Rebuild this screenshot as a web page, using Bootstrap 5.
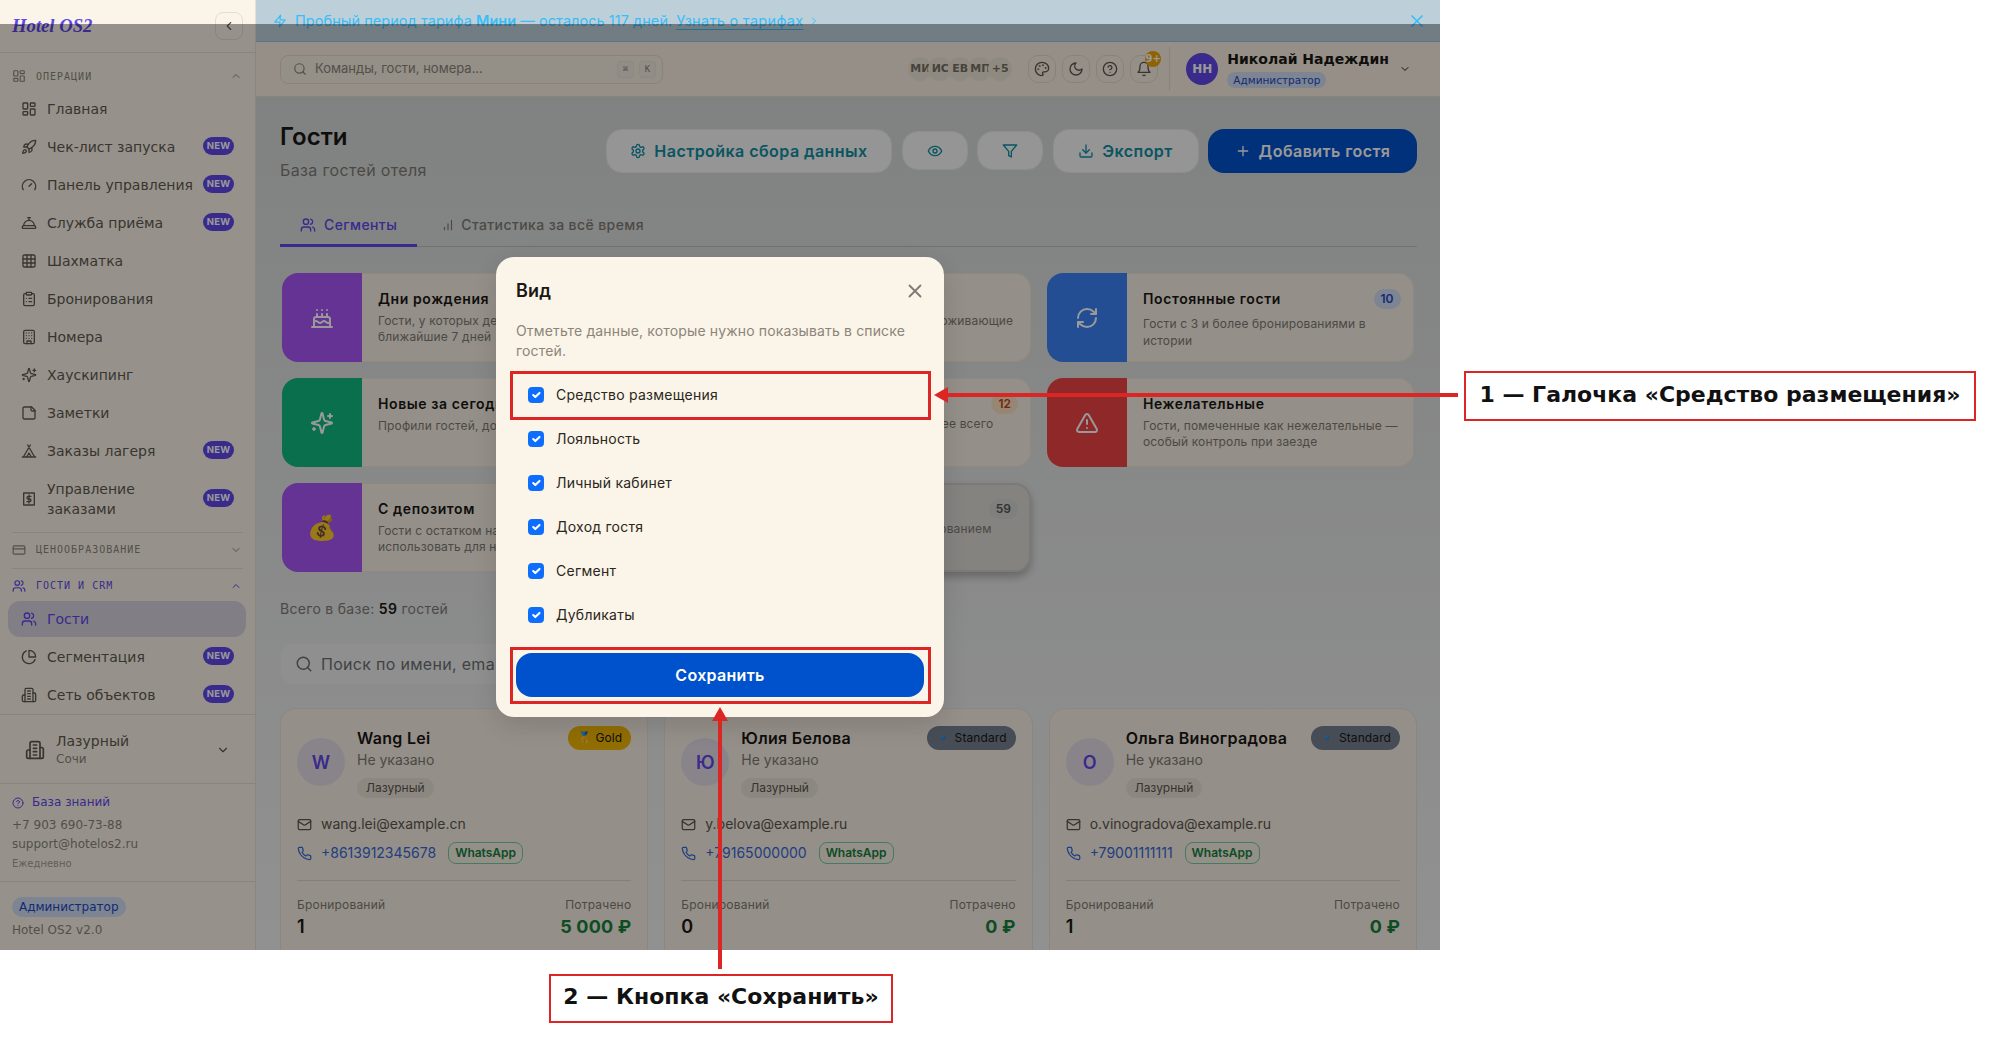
<!DOCTYPE html>
<html lang="ru">
<head>
<meta charset="utf-8">
<title>Hotel OS2</title>
<link href="https://cdn.jsdelivr.net/npm/bootstrap@5.3.0/dist/css/bootstrap.min.css" rel="stylesheet">
<style>
html,body{margin:0;background:#fff;width:1997px;height:1047px;overflow:hidden;}
body{font-family:Inter,"Liberation Sans",sans-serif;color:#1a1814;font-size:14px;}
svg.ic{fill:none;stroke:currentColor;stroke-width:2;stroke-linecap:round;stroke-linejoin:round;flex-shrink:0;display:block;}
.s12{width:12px;height:12px}.s14{width:14px;height:14px}.s15{width:15px;height:15px}.s16{width:16px;height:16px}.s18{width:18px;height:18px}.s20{width:20px;height:20px}.s22{width:22px;height:22px}.s24{width:24px;height:24px}
.app-frame{position:relative;width:1440px;height:950px;overflow:hidden;display:flex;background:#eee;}
/* sidebar */
.side{width:256px;flex:none;height:950px;background:#fbf4e8;border-right:1px solid #e7e0d4;font-family:"DejaVu Sans",sans-serif;color:#5c564e;display:flex;flex-direction:column;}
.side>*{flex:none;}
.brand{height:53px;border-bottom:1px solid #e4ddd0;padding:0 12px;}
.logo{font-family:"Liberation Serif",serif;font-style:italic;font-weight:700;font-size:18.7px;color:#5f47ea;line-height:50px;}
.collapse-btn{width:28px;height:28px;border:1px solid #e4ddd0;border-radius:8px;color:#5c564e;}
.sec-head{height:30px;padding:0 13px 0 12px;font-family:"DejaVu Sans Mono",monospace;font-size:10px;letter-spacing:1px;text-transform:uppercase;color:#8a8479;}
.sec-head.first{margin-top:8px;}
.sec-head .t,.sec-line .t,.sec-wrap .t{margin-left:10px;flex:1}
.sec-line{height:36px;border-top:1px solid #e4ddd0;margin:5px 12px 0;padding:0 1px 2px 0;font-family:"DejaVu Sans Mono",monospace;font-size:10px;letter-spacing:1px;color:#8a8479;}
.sec-wrap{margin:0 12px;border-top:1px solid #e4ddd0;padding:1px 1px 0 0;height:33px;font-family:"DejaVu Sans Mono",monospace;font-size:10px;letter-spacing:1px;color:#5f47ea;}
.menu{display:flex;flex-direction:column;gap:2px;padding:0 9px 0 8px;}
.mi{display:flex;align-items:center;gap:10px;padding:8px 12px 8px 13px;line-height:20px;font-size:14px;color:#5f5950;border-radius:12px;}
.mi .lb{flex:1;min-width:0;}
.mi.on{background:#d9d2de;color:#5f47ea;}
.mi .nb{flex:none;width:31px;text-align:center;background:#5f47ea;color:#fff;font-family:Inter,sans-serif;font-size:9.5px;font-weight:700;line-height:18px;height:18px;padding:0;border-radius:9px;position:relative;top:-1px;letter-spacing:.2px;}
.prop{height:69px;border-top:1px solid #e4ddd0;margin-top:1px;padding:1px 25px 0 25px;}
.prop .nm{font-size:14px;line-height:18px;color:#5f5950;}
.prop .ct{font-size:12px;line-height:18px;color:#8a8479;}
.prop .bi{margin-right:3px;}
.help{height:98px;border-top:1px solid #e4ddd0;padding:9px 12px 0;font-size:12px;line-height:19px;color:#8a8479;}
.help .kb{color:#5f47ea;margin-bottom:4px;}
.help .dl{font-size:10px;color:#a49d91;}
.side>.foot{flex:1;border-top:1px solid #e4ddd0;padding:15px 12px 0;font-size:12px;color:#8a8479;}
.rolepill{display:inline-block;background:#d0dcf3;color:#1f48c0;border-radius:10px;line-height:20px;height:20px;padding:0 7px;}
.foot .ver{margin-top:4px;line-height:18px;}
/* main */
.mainc{flex:1;min-width:0;display:flex;flex-direction:column;height:950px;background:linear-gradient(180deg,#d4d6d6 0,#d6d8d8 10%,#f2f2f2 100%);}
.trial{height:42px;flex:none;background:#bdd0d9;border-bottom:1px solid #8cc6e6;color:#38bdf8;padding:0 13px 0 17px;font-size:14.5px;letter-spacing:.05px;}
.trial b{font-weight:600}
.trial u{text-underline-offset:3px;letter-spacing:.3px;}
.topb{height:55px;flex:none;background:#fbefe1;border-bottom:1px solid #e5dccd;padding:0 29px 0 24px;}
.cmd{width:383px;height:29px;border:1px solid #e3dacb;border-radius:8px;background:#f7eee2;padding:0 6px 0 12px;color:#8d8579;font-size:13px;}
.cmd .ph{flex:1;margin-left:8px;}
.kk{width:17px;height:17px;border:1px solid #ebe3d6;background:#f3ecdf;border-radius:4px;font-family:"DejaVu Sans Mono",monospace;font-size:9px;line-height:15px;text-align:center;margin-left:5px;color:#8d8579;}
.stack{margin-left:auto;margin-right:16px;}
.stack span{width:24px;height:24px;border-radius:50%;background:#efe6d8;font-family:"DejaVu Sans",sans-serif;font-size:11px;font-weight:600;color:#766f64;display:flex;align-items:center;justify-content:center;margin-left:-4px;overflow:hidden;}
.tb-btn{width:28px;height:28px;border:1px solid #e3dacb;border-radius:10px;color:#5c564e;position:relative;margin-left:6px;}
.tb-btn.n1{margin-left:0}
.dot9{position:absolute;right:-4px;top:-5px;width:16px;height:16px;border-radius:50%;background:#f0a30a;color:#fff;font-size:10px;font-weight:700;line-height:16px;text-align:center;font-family:"DejaVu Sans",sans-serif;}
.vdiv{width:1px;height:44px;background:#e3dacb;margin:0 16px 0 11px;}
.ava-u{width:32px;height:32px;border-radius:50%;background:#5f47ea;color:#fff;font-family:"DejaVu Sans",sans-serif;font-size:12px;font-weight:700;margin-right:9px;}
.unm{font-family:"DejaVu Sans",sans-serif;font-weight:700;font-size:14px;line-height:18px;color:#1a1814;}
.urole{display:inline-block;font-family:"DejaVu Sans",sans-serif;font-size:10.5px;line-height:16px;height:16px;padding:0 6px;border-radius:8px;background:#d0dcf3;color:#1f48c0;margin-top:1px;}
.umeta{margin-right:10px;}
.contentc{padding:24px 23px 0 24px;flex:1;overflow:hidden;}
h1.ttl{font-size:24px;font-weight:600;line-height:32px;margin:0;color:#1a1814;}
.subt{font-size:16px;line-height:20px;margin-top:7px;color:#7e7a74;letter-spacing:.35px;}
.acts{margin-top:8px;gap:9.5px;}
.btn.ghost{height:44px;border-radius:16px;background:#f8f8f8;border:1px solid #ececec;color:#0f8ea3;font-size:16px;font-weight:600;display:flex;align-items:center;justify-content:center;gap:8px;padding:0;letter-spacing:.45px;}
.btn.ghost.w1{width:286px}.btn.ghost.w2{width:66px;height:39px;margin-top:2px;}.btn.ghost.w3{width:146px}
.btn.prim{height:44px;width:209px;border-radius:16px;background:#0052cc;border:0;color:#fff;font-size:16px;font-weight:600;display:flex;align-items:center;justify-content:center;gap:8px;padding:0;letter-spacing:.45px;}
.tabsx{margin-top:20px;height:47px;border-bottom:1px solid #bdbfbf;gap:4px;}
.tabx{display:flex;align-items:center;gap:8px;padding:2px 20px 0;height:47px;color:#7e7a74;font-size:14px;font-weight:500;letter-spacing:.4px;}
.tabx.on{color:#5f47ea;border-bottom:3px solid #5f47ea;padding-top:5px;}
.tabx .bi2{margin-right:-2px;}
.seg-grid{display:grid;grid-template-columns:repeat(3,366.5px);gap:16px 16px;margin:26px 2px 0;}
.seg{height:89px;background:#f7efe3;box-shadow:inset 0 0 0 1px #efe4d4;border-radius:16px;display:flex;overflow:hidden;}
.seg.hov{box-shadow:inset 0 0 0 2px #cfccc7,0 5px 8px rgba(0,0,0,.25);background:#dcdad6;overflow:visible;}
.seg .sw{width:80px;flex:none;display:flex;align-items:center;justify-content:center;color:#fff;}
.sw.pu{background:#a855f7}.sw.gr{background:#10b981}.sw.bl{background:#3b82f6}.sw.re{background:#ef4444}.sw.ye{background:#f59e0b}.sw.gy{background:#94a3b8}
.seg .bd{flex:1;min-width:0;padding:16px 13px 0 16px;}
.seg .tt{font-size:14px;font-weight:600;line-height:20px;letter-spacing:.6px;color:#1a1814;white-space:nowrap;}
.seg .ds{font-size:12px;line-height:16px;margin-top:4px;color:#7e7a74;letter-spacing:.15px;}
.seg .ds.tall{margin-top:6px;line-height:17px;}
.seg .ds.tight{margin-top:2px;}
.cnt{flex:none;height:20px;border-radius:10px;padding:0 7px;font-size:12px;font-weight:600;line-height:20px;}
.cnt.b{background:#d0dcf3;color:#1f48c0}.cnt.o{background:#fae1c4;color:#c2410c}.cnt.g{background:#d4d4d2;color:#555}
.tot{margin-top:27px;line-height:20px;font-size:14px;color:#7e7a74;letter-spacing:.3px;}
.tot b{font-weight:600;color:#1a1814}
.gsearch{margin-top:25px;margin-left:1px;width:600px;height:40px;background:#efefef;border-radius:12px;color:#6b7075;padding:0 14px;font-size:16px;gap:8px;letter-spacing:.3px;}
.g-grid{display:grid;grid-template-columns:repeat(3,1fr);gap:16px;margin-top:24px;}
.card.gc{height:300px;background:#f7efe3;border:1px solid #e9e0d3;border-radius:16px;padding:17px 16px 16px;color:#1a1814;}
.ga{width:48px;height:48px;border-radius:50%;background:#e4dde7;color:#5f47ea;font-size:18px;font-weight:600;flex:none;margin-right:12px;}
.gn{font-size:16px;font-weight:600;line-height:24px;white-space:nowrap;letter-spacing:.3px;}
.gs{font-size:14px;line-height:20px;color:#7e7a74;}
.gp{display:inline-block;margin-top:8px;height:20px;line-height:20px;font-size:12px;padding:0 9px;border-radius:10px;background:#eae2d6;color:#5c564e;}
.tier{flex:none;margin-left:auto;height:24px;border-radius:12px;padding:0 9px;font-size:12px;line-height:24px;white-space:nowrap;color:#1a1814;letter-spacing:.1px;}
.tier.go{background:#f2b705}.tier.st{background:#76808f}
.gl{font-size:14px;line-height:20px;color:#5c564e;gap:9px;}
.gl.m{margin-top:16px;}
.gl.p{margin-top:8px;height:22px;color:#3868d8;}
.wa{height:22px;border:1px solid #6fcf97;border-radius:8px;color:#15803d;font-size:12px;font-weight:600;line-height:20px;padding:0 6px;margin-left:3px;}
.gr-line{border-top:1px solid #ddd5c8;margin-top:16px;padding-top:16px;}
.sl{font-size:12px;line-height:16px;color:#7e7a74;letter-spacing:.2px;}
.sv{font-size:18px;font-weight:600;line-height:24px;margin-top:2px;}
.sg{font-size:18px;font-weight:700;line-height:24px;margin-top:2px;color:#15803d;letter-spacing:.2px;}
/* overlay */
.shade{position:absolute;left:0;right:0;top:24px;bottom:0;background:rgba(0,0,0,.4);}
.dlg{position:absolute;left:496px;top:257px;width:448px;height:460px;background:#fbf4e8;border-radius:18px;padding:20px;box-shadow:0 8px 24px rgba(0,0,0,.12);}
.dlg h2{font-size:18px;font-weight:600;line-height:28px;margin:0;color:#1a1814;letter-spacing:.2px;}
.dlg .x{color:#7e7a74;margin-right:-2px;}
.dlg p{font-size:14px;line-height:20px;margin:16px 0 12px;color:#8b857a;letter-spacing:.15px;}
.dlg-row{height:44px;padding-left:12px;gap:12px;display:flex;align-items:center;font-size:14px;color:#2a2721;letter-spacing:.25px;}
.dlg-row .form-check-input{margin:0;width:16px;height:16px;flex:none;}
.dlg-row .tx{position:relative;top:-.5px;}
.dlg .btn-save{display:block;width:408px;height:44px;margin-top:16px;border-radius:16px;background:#0052cc;border:0;color:#fff;font-size:16px;font-weight:600;padding:0;letter-spacing:.3px;}
/* annotations */
.an-box{position:absolute;border:3px solid #dc2626;}
.an-a{left:510px;top:371px;width:421px;height:49px;}
.an-b{left:510px;top:647px;width:421px;height:57px;}
.an-lb{position:absolute;border:2px solid #dc2626;background:#fff;color:#111;font-family:"DejaVu Sans",sans-serif;font-weight:700;font-size:22px;display:flex;align-items:center;justify-content:center;white-space:nowrap;padding-bottom:4px;}
.an-l1{left:1464px;top:371px;width:512px;height:50px;}
.an-l2{left:549px;top:974px;width:344px;height:49px;}
.an-svg{position:absolute;left:0;top:0;width:1997px;height:1047px;pointer-events:none;}
</style>
</head>
<body>
<svg width="0" height="0" style="position:absolute" aria-hidden="true">
<defs>
<symbol id="dash" viewBox="0 0 24 24"><rect x="3" y="3" width="7" height="9" rx="1"/><rect x="14" y="3" width="7" height="5" rx="1"/><rect x="14" y="12" width="7" height="9" rx="1"/><rect x="3" y="16" width="7" height="5" rx="1"/></symbol>
<symbol id="rocket" viewBox="0 0 24 24"><path d="M4.5 16.5c-1.5 1.26-2 5-2 5s3.74-.5 5-2c.71-.84.7-2.13-.09-2.91a2.18 2.18 0 0 0-2.91-.09z"/><path d="m12 15-3-3a22 22 0 0 1 2-3.95A12.88 12.88 0 0 1 22 2c0 2.72-.78 7.5-6 11a22.35 22.35 0 0 1-4 2z"/><path d="M9 12H4s.55-3.03 2-4c1.62-1.08 5 0 5 0"/><path d="M12 15v5s3.03-.55 4-2c1.08-1.62 0-5 0-5"/></symbol>
<symbol id="gauge" viewBox="0 0 24 24"><path d="m12 14 4-4"/><path d="M3.34 19a10 10 0 1 1 17.32 0"/></symbol>
<symbol id="bellc" viewBox="0 0 24 24"><path d="M3 20a1 1 0 0 1-1-1v-1a2 2 0 0 1 2-2h16a2 2 0 0 1 2 2v1a1 1 0 0 1-1 1Z"/><path d="M20 16a8 8 0 1 0-16 0"/><path d="M12 4v4"/><path d="M10 4h4"/></symbol>
<symbol id="grid" viewBox="0 0 24 24"><rect x="3" y="3" width="18" height="18" rx="2"/><path d="M3 9h18M3 15h18M9 3v18M15 3v18"/></symbol>
<symbol id="clip" viewBox="0 0 24 24"><rect x="8" y="2" width="8" height="4" rx="1"/><path d="M16 4h2a2 2 0 0 1 2 2v14a2 2 0 0 1-2 2H6a2 2 0 0 1-2-2V6a2 2 0 0 1 2-2h2"/><path d="M12 11h4M12 16h4M8 11h.01M8 16h.01"/></symbol>
<symbol id="hotel" viewBox="0 0 24 24"><rect x="4" y="2" width="16" height="20" rx="2"/><path d="M9 22v-4h6v4M8 6h.01M16 6h.01M12 6h.01M12 10h.01M12 14h.01M16 10h.01M16 14h.01M8 10h.01M8 14h.01"/></symbol>
<symbol id="spark" viewBox="0 0 24 24"><path d="M9.937 15.5A2 2 0 0 0 8.5 14.063l-6.135-1.582a.5.5 0 0 1 0-.962L8.5 9.936A2 2 0 0 0 9.937 8.5l1.582-6.135a.5.5 0 0 1 .963 0L14.063 8.5A2 2 0 0 0 15.5 9.937l6.135 1.581a.5.5 0 0 1 0 .964L15.5 14.063a2 2 0 0 0-1.437 1.437l-1.582 6.135a.5.5 0 0 1-.963 0z"/><path d="M20 3v4M22 5h-4M4 17v2M5 18H3"/></symbol>
<symbol id="note" viewBox="0 0 24 24"><path d="M16 3H5a2 2 0 0 0-2 2v14a2 2 0 0 0 2 2h14a2 2 0 0 0 2-2V8Z"/><path d="M15 3v4a2 2 0 0 0 2 2h4"/></symbol>
<symbol id="tent" viewBox="0 0 24 24"><path d="M3.5 21 14 3M20.5 21 10 3M15.5 21 12 15l-3.5 6M2 21h20"/></symbol>
<symbol id="bill" viewBox="0 0 24 24"><path d="M4 3h16v18H4z"/><path d="M15 8h-4a2 2 0 0 0 0 4h2a2 2 0 0 1 0 4H9M12 6v12"/></symbol>
<symbol id="cardi" viewBox="0 0 24 24"><rect x="2" y="5" width="20" height="14" rx="2"/><path d="M2 10h20"/></symbol>
<symbol id="users" viewBox="0 0 24 24"><path d="M16 21v-2a4 4 0 0 0-4-4H6a4 4 0 0 0-4 4v2"/><circle cx="9" cy="7" r="4"/><path d="M22 21v-2a4 4 0 0 0-3-3.87M16 3.13a4 4 0 0 1 0 7.75"/></symbol>
<symbol id="pie" viewBox="0 0 24 24"><path d="M21.21 15.89A10 10 0 1 1 8 2.83"/><path d="M22 12A10 10 0 0 0 12 2v10z"/></symbol>
<symbol id="bld" viewBox="0 0 24 24"><path d="M6 22V4a2 2 0 0 1 2-2h8a2 2 0 0 1 2 2v18Z"/><path d="M6 12H4a2 2 0 0 0-2 2v6a2 2 0 0 0 2 2h2M18 9h2a2 2 0 0 1 2 2v9a2 2 0 0 1-2 2h-2M10 6h4M10 10h4M10 14h4M10 18h4"/></symbol>
<symbol id="help" viewBox="0 0 24 24"><circle cx="12" cy="12" r="10"/><path d="M9.09 9a3 3 0 0 1 5.83 1c0 2-3 3-3 3M12 17h.01"/></symbol>
<symbol id="up" viewBox="0 0 24 24"><path d="m18 15-6-6-6 6"/></symbol>
<symbol id="down" viewBox="0 0 24 24"><path d="m6 9 6 6 6-6"/></symbol>
<symbol id="left" viewBox="0 0 24 24"><path d="m15 18-6-6 6-6"/></symbol>
<symbol id="right" viewBox="0 0 24 24"><path d="m9 18 6-6-6-6"/></symbol>
<symbol id="zap" viewBox="0 0 24 24"><path d="M13 2 3 14h9l-1 8 10-12h-9l1-8z"/></symbol>
<symbol id="x" viewBox="0 0 24 24"><path d="M18 6 6 18M6 6l12 12"/></symbol>
<symbol id="search" viewBox="0 0 24 24"><circle cx="11" cy="11" r="8"/><path d="m21 21-4.3-4.3"/></symbol>
<symbol id="palette" viewBox="0 0 24 24"><circle cx="13.5" cy="6.5" r=".5"/><circle cx="17.5" cy="10.5" r=".5"/><circle cx="8.5" cy="7.5" r=".5"/><circle cx="6.5" cy="12.5" r=".5"/><path d="M12 2C6.5 2 2 6.5 2 12s4.5 10 10 10c.926 0 1.648-.746 1.648-1.688 0-.437-.18-.835-.437-1.125-.29-.289-.438-.652-.438-1.125a1.64 1.64 0 0 1 1.668-1.668h1.996c3.051 0 5.555-2.503 5.555-5.554C21.965 6.012 17.461 2 12 2z"/></symbol>
<symbol id="moon" viewBox="0 0 24 24"><path d="M12 3a6 6 0 0 0 9 9 9 9 0 1 1-9-9Z"/></symbol>
<symbol id="bell" viewBox="0 0 24 24"><path d="M6 8a6 6 0 0 1 12 0c0 7 3 9 3 9H3s3-2 3-9"/><path d="M10.3 21a1.94 1.94 0 0 0 3.4 0"/></symbol>
<symbol id="gear" viewBox="0 0 24 24"><path d="M12.22 2h-.44a2 2 0 0 0-2 2v.18a2 2 0 0 1-1 1.73l-.43.25a2 2 0 0 1-2 0l-.15-.08a2 2 0 0 0-2.73.73l-.22.38a2 2 0 0 0 .73 2.73l.15.1a2 2 0 0 1 1 1.72v.51a2 2 0 0 1-1 1.74l-.15.09a2 2 0 0 0-.73 2.73l.22.38a2 2 0 0 0 2.73.73l.15-.08a2 2 0 0 1 2 0l.43.25a2 2 0 0 1 1 1.73V20a2 2 0 0 0 2 2h.44a2 2 0 0 0 2-2v-.18a2 2 0 0 1 1-1.73l.43-.25a2 2 0 0 1 2 0l.15.08a2 2 0 0 0 2.73-.73l.22-.39a2 2 0 0 0-.73-2.73l-.15-.08a2 2 0 0 1-1-1.74v-.5a2 2 0 0 1 1-1.74l.15-.09a2 2 0 0 0 .73-2.73l-.22-.38a2 2 0 0 0-2.73-.73l-.15.08a2 2 0 0 1-2 0l-.43-.25a2 2 0 0 1-1-1.73V4a2 2 0 0 0-2-2z"/><circle cx="12" cy="12" r="3"/></symbol>
<symbol id="eye" viewBox="0 0 24 24"><path d="M2 12s3-7 10-7 10 7 10 7-3 7-10 7-10-7-10-7Z"/><circle cx="12" cy="12" r="3"/></symbol>
<symbol id="filter" viewBox="0 0 24 24"><polygon points="22 3 2 3 10 12.46 10 19 14 21 14 12.46 22 3"/></symbol>
<symbol id="dl" viewBox="0 0 24 24"><path d="M21 15v4a2 2 0 0 1-2 2H5a2 2 0 0 1-2-2v-4"/><polyline points="7 10 12 15 17 10"/><line x1="12" y1="15" x2="12" y2="3"/></symbol>
<symbol id="plus" viewBox="0 0 24 24"><path d="M5 12h14M12 5v14"/></symbol>
<symbol id="bars" viewBox="0 0 24 24"><path d="M12 20V10M18 20V4M6 20v-4"/></symbol>
<symbol id="cake" viewBox="0 0 24 24"><path d="M20 21v-8a2 2 0 0 0-2-2H6a2 2 0 0 0-2 2v8"/><path d="M4 16s.5-1 2-1 2.5 2 4 2 2.5-2 4-2 2.5 2 4 2 2-1 2-1M2 21h20M7 8v3M12 8v3M17 8v3M7 4h.01M12 4h.01M17 4h.01"/></symbol>
<symbol id="refresh" viewBox="0 0 24 24"><path d="M3 12a9 9 0 0 1 9-9 9.75 9.75 0 0 1 6.74 2.74L21 8"/><path d="M21 3v5h-5"/><path d="M21 12a9 9 0 0 1-9 9 9.75 9.75 0 0 1-6.74-2.74L3 16"/><path d="M8 16H3v5"/></symbol>
<symbol id="warn" viewBox="0 0 24 24"><path d="m21.73 18-8-14a2 2 0 0 0-3.48 0l-8 14A2 2 0 0 0 4 21h16a2 2 0 0 0 1.73-3"/><path d="M12 9v4M12 17h.01"/></symbol>
<symbol id="mail" viewBox="0 0 24 24"><rect x="2" y="4" width="20" height="16" rx="2"/><path d="m22 7-8.97 5.7a1.94 1.94 0 0 1-2.06 0L2 7"/></symbol>
<symbol id="phone" viewBox="0 0 24 24"><path d="M22 16.92v3a2 2 0 0 1-2.18 2 19.79 19.79 0 0 1-8.63-3.07 19.5 19.5 0 0 1-6-6 19.79 19.79 0 0 1-3.07-8.67A2 2 0 0 1 4.11 2h3a2 2 0 0 1 2 1.72 12.84 12.84 0 0 0 .7 2.81 2 2 0 0 1-.45 2.11L8.09 9.91a16 16 0 0 0 6 6l1.27-1.27a2 2 0 0 1 2.11-.45 12.84 12.84 0 0 0 2.81.7A2 2 0 0 1 22 16.92z"/></symbol>
</defs>
</svg>

<div class="app-frame">
  <aside class="side">
    <div class="brand d-flex align-items-center justify-content-between">
      <span class="logo">Hotel OS2</span>
      <span class="collapse-btn d-flex align-items-center justify-content-center"><svg class="ic s14"><use href="#left"/></svg></span>
    </div>
    <div class="sec-head first d-flex align-items-center"><svg class="ic s14"><use href="#dash"/></svg><span class="t">Операции</span><svg class="ic s12"><use href="#up"/></svg></div>
    <div class="menu">
      <div class="mi"><svg class="ic s16"><use href="#dash"/></svg><span class="lb">Главная</span></div>
      <div class="mi"><svg class="ic s16"><use href="#rocket"/></svg><span class="lb">Чек-лист запуска</span><span class="nb">NEW</span></div>
      <div class="mi"><svg class="ic s16"><use href="#gauge"/></svg><span class="lb">Панель управления</span><span class="nb">NEW</span></div>
      <div class="mi"><svg class="ic s16"><use href="#bellc"/></svg><span class="lb">Служба приёма</span><span class="nb">NEW</span></div>
      <div class="mi"><svg class="ic s16"><use href="#grid"/></svg><span class="lb">Шахматка</span></div>
      <div class="mi"><svg class="ic s16"><use href="#clip"/></svg><span class="lb">Бронирования</span></div>
      <div class="mi"><svg class="ic s16"><use href="#hotel"/></svg><span class="lb">Номера</span></div>
      <div class="mi"><svg class="ic s16"><use href="#spark"/></svg><span class="lb">Хаускипинг</span></div>
      <div class="mi"><svg class="ic s16"><use href="#note"/></svg><span class="lb">Заметки</span></div>
      <div class="mi"><svg class="ic s16"><use href="#tent"/></svg><span class="lb">Заказы лагеря</span><span class="nb">NEW</span></div>
      <div class="mi"><svg class="ic s16"><use href="#bill"/></svg><span class="lb">Управление заказами</span><span class="nb">NEW</span></div>
    </div>
    <div class="sec-line d-flex align-items-center"><svg class="ic s14"><use href="#cardi"/></svg><span class="t">ЦЕНООБРАЗОВАНИЕ</span><svg class="ic s12"><use href="#down"/></svg></div>
    <div class="sec-wrap d-flex align-items-center"><svg class="ic s14"><use href="#users"/></svg><span class="t">ГОСТИ И CRM</span><svg class="ic s12"><use href="#up"/></svg></div>
    <div class="menu">
      <div class="mi on"><svg class="ic s16"><use href="#users"/></svg><span class="lb">Гости</span></div>
      <div class="mi"><svg class="ic s16"><use href="#pie"/></svg><span class="lb">Сегментация</span><span class="nb">NEW</span></div>
      <div class="mi"><svg class="ic s16"><use href="#bld"/></svg><span class="lb">Сеть объектов</span><span class="nb">NEW</span></div>
    </div>
    <div class="prop d-flex align-items-center gap-2">
      <svg class="ic s20 bi"><use href="#bld"/></svg>
      <div class="flex-grow-1"><div class="nm">Лазурный</div><div class="ct">Сочи</div></div>
      <svg class="ic s14"><use href="#down"/></svg>
    </div>
    <div class="help">
      <div class="kb d-flex align-items-center gap-2"><svg class="ic s12"><use href="#help"/></svg><span>База знаний</span></div>
      <div>+7 903 690-73-88</div>
      <div>support@hotelos2.ru</div>
      <div class="dl">Ежедневно</div>
    </div>
    <div class="foot">
      <span class="rolepill">Администратор</span>
      <div class="ver">Hotel OS2 v2.0</div>
    </div>
  </aside>

  <div class="mainc">
    <div class="trial d-flex align-items-center">
      <svg class="ic s14 me-2"><use href="#zap"/></svg>
      <span>Пробный период тарифа <b>Мини</b> — осталось 117 дней. <u>Узнать о тарифах</u></span>
      <svg class="ic s12 ms-1"><use href="#right"/></svg>
      <svg class="ic s20 ms-auto"><use href="#x"/></svg>
    </div>
    <div class="topb d-flex align-items-center">
      <div class="cmd d-flex align-items-center">
        <svg class="ic s14"><use href="#search"/></svg><span class="ph">Команды, гости, номера...</span>
        <span class="kk">⌘</span><span class="kk">K</span>
      </div>
      <div class="stack d-flex"><span>МИ</span><span>ИС</span><span>ЕВ</span><span>МП</span><span>+5</span></div>
      <span class="tb-btn n1 d-flex align-items-center justify-content-center"><svg class="ic s16"><use href="#palette"/></svg></span>
      <span class="tb-btn d-flex align-items-center justify-content-center"><svg class="ic s16"><use href="#moon"/></svg></span>
      <span class="tb-btn d-flex align-items-center justify-content-center"><svg class="ic s16"><use href="#help"/></svg></span>
      <span class="tb-btn d-flex align-items-center justify-content-center"><svg class="ic s16"><use href="#bell"/></svg><span class="dot9">9+</span></span>
      <span class="vdiv"></span>
      <span class="ava-u d-flex align-items-center justify-content-center">НН</span>
      <div class="umeta"><div class="unm">Николай Надеждин</div><span class="urole">Администратор</span></div>
      <svg class="ic s12"><use href="#down"/></svg>
    </div>
    <div class="contentc">
      <div class="d-flex justify-content-between align-items-start">
        <div><h1 class="ttl">Гости</h1><div class="subt">База гостей отеля</div></div>
        <div class="acts d-flex align-items-start">
          <button class="btn ghost w1"><svg class="ic s16"><use href="#gear"/></svg>Настройка сбора данных</button>
          <button class="btn ghost w2"><svg class="ic s16"><use href="#eye"/></svg></button>
          <button class="btn ghost w2"><svg class="ic s16"><use href="#filter"/></svg></button>
          <button class="btn ghost w3"><svg class="ic s16"><use href="#dl"/></svg>Экспорт</button>
          <button class="btn prim"><svg class="ic s16"><use href="#plus"/></svg>Добавить гостя</button>
        </div>
      </div>
      <div class="tabsx d-flex">
        <div class="tabx on"><svg class="ic s16"><use href="#users"/></svg>Сегменты</div>
        <div class="tabx"><svg class="ic s14 bi2"><use href="#bars"/></svg>Статистика за всё время</div>
      </div>
      <div class="seg-grid">
        <div class="seg"><div class="sw pu"><svg class="ic s24"><use href="#cake"/></svg></div><div class="bd"><div class="tt">Дни рождения</div><div class="ds">Гости, у которых день рождения в ближайшие 7 дней</div></div></div>
        <div class="seg"><div class="sw gy"><svg class="ic s24"><use href="#users"/></svg></div><div class="bd"><div class="tt">Сейчас в отеле</div><div class="ds">Все гости, которые сейчас проживающие</div></div></div>
        <div class="seg"><div class="sw bl"><svg class="ic s24"><use href="#refresh"/></svg></div><div class="bd"><div class="d-flex justify-content-between"><div class="tt">Постоянные гости</div><span class="cnt b">10</span></div><div class="ds tall">Гости с 3 и более бронированиями в истории</div></div></div>
        <div class="seg"><div class="sw gr"><svg class="ic s24"><use href="#spark"/></svg></div><div class="bd"><div class="tt">Новые за сегодня</div><div class="ds">Профили гостей, добавленные сегодня</div></div></div>
        <div class="seg"><div class="sw ye"><svg class="ic s24"><use href="#rocket"/></svg></div><div class="bd"><div class="d-flex justify-content-between"><div class="tt">VIP-гости</div><span class="cnt o">12</span></div><div class="ds tight">Гости, которые заплатили более всего</div></div></div>
        <div class="seg"><div class="sw re"><svg class="ic s24"><use href="#warn"/></svg></div><div class="bd"><div class="tt">Нежелательные</div><div class="ds">Гости, помеченные как нежелательные — особый контроль при заезде</div></div></div>
        <div class="seg"><div class="sw pu fs-4">💰</div><div class="bd"><div class="tt">С депозитом</div><div class="ds">Гости с остатком на депозите — можно использовать для новых броней</div></div></div>
        <div class="seg hov"><div class="sw gy"><svg class="ic s24"><use href="#users"/></svg></div><div class="bd"><div class="d-flex justify-content-between"><div class="tt">Все гости</div><span class="cnt g">59</span></div><div class="ds tight">Все профили гостей с бронированием</div></div></div>
      </div>
      <div class="tot">Всего в базе: <b>59</b> гостей</div>
      <div class="gsearch d-flex align-items-center"><svg class="ic s18"><use href="#search"/></svg><span>Поиск по имени, email, телефону</span></div>
      <div class="g-grid">
        <div class="card gc">
          <div class="d-flex align-items-center"><div class="ga d-flex align-items-center justify-content-center">W</div><div><div class="gn">Wang Lei</div><div class="gs">Не указано</div><span class="gp">Лазурный</span></div><span class="tier go align-self-start">🥇 Gold</span></div>
          <div class="gl m d-flex align-items-center"><svg class="ic s15"><use href="#mail"/></svg>wang.lei@example.cn</div>
          <div class="gl p d-flex align-items-center"><svg class="ic s15"><use href="#phone"/></svg>+8613912345678<span class="wa">WhatsApp</span></div>
          <div class="gr-line d-flex justify-content-between"><div><div class="sl">Бронирований</div><div class="sv">1</div></div><div class="text-end"><div class="sl">Потрачено</div><div class="sg">5 000 ₽</div></div></div>
        </div>
        <div class="card gc">
          <div class="d-flex align-items-center"><div class="ga d-flex align-items-center justify-content-center">Ю</div><div><div class="gn">Юлия Белова</div><div class="gs">Не указано</div><span class="gp">Лазурный</span></div><span class="tier st align-self-start">🔹 Standard</span></div>
          <div class="gl m d-flex align-items-center"><svg class="ic s15"><use href="#mail"/></svg>y.belova@example.ru</div>
          <div class="gl p d-flex align-items-center"><svg class="ic s15"><use href="#phone"/></svg>+79165000000<span class="wa">WhatsApp</span></div>
          <div class="gr-line d-flex justify-content-between"><div><div class="sl">Бронирований</div><div class="sv">0</div></div><div class="text-end"><div class="sl">Потрачено</div><div class="sg">0 ₽</div></div></div>
        </div>
        <div class="card gc">
          <div class="d-flex align-items-center"><div class="ga d-flex align-items-center justify-content-center">О</div><div><div class="gn">Ольга Виноградова</div><div class="gs">Не указано</div><span class="gp">Лазурный</span></div><span class="tier st align-self-start">🔹 Standard</span></div>
          <div class="gl m d-flex align-items-center"><svg class="ic s15"><use href="#mail"/></svg>o.vinogradova@example.ru</div>
          <div class="gl p d-flex align-items-center"><svg class="ic s15"><use href="#phone"/></svg>+79001111111<span class="wa">WhatsApp</span></div>
          <div class="gr-line d-flex justify-content-between"><div><div class="sl">Бронирований</div><div class="sv">1</div></div><div class="text-end"><div class="sl">Потрачено</div><div class="sg">0 ₽</div></div></div>
        </div>
      </div>
    </div>
  </div>

  <div class="shade"></div>
  <div class="dlg">
    <div class="d-flex align-items-center justify-content-between"><h2>Вид</h2><svg class="ic s22 x"><use href="#x"/></svg></div>
    <p>Отметьте данные, которые нужно показывать в списке гостей.</p>
    <label class="dlg-row"><input class="form-check-input" type="checkbox" checked><span class="tx">Средство размещения</span></label>
    <label class="dlg-row"><input class="form-check-input" type="checkbox" checked><span class="tx">Лояльность</span></label>
    <label class="dlg-row"><input class="form-check-input" type="checkbox" checked><span class="tx">Личный кабинет</span></label>
    <label class="dlg-row"><input class="form-check-input" type="checkbox" checked><span class="tx">Доход гостя</span></label>
    <label class="dlg-row"><input class="form-check-input" type="checkbox" checked><span class="tx">Сегмент</span></label>
    <label class="dlg-row"><input class="form-check-input" type="checkbox" checked><span class="tx">Дубликаты</span></label>
    <button class="btn-save">Сохранить</button>
  </div>
</div>

<div class="an-box an-a"></div>
<div class="an-box an-b"></div>
<svg class="an-svg" viewBox="0 0 1997 1047" aria-hidden="true">
  <rect x="946" y="393" width="512" height="4" fill="#dc2626"/>
  <polygon points="934,395 948,387 948,403" fill="#dc2626"/>
  <rect x="718" y="720" width="4" height="249" fill="#dc2626"/>
  <polygon points="720,707 712,721 728,721" fill="#dc2626"/>
</svg>
<div class="an-lb an-l1">1 — Галочка «Средство размещения»</div>
<div class="an-lb an-l2">2 — Кнопка «Сохранить»</div>

<script src="https://cdn.jsdelivr.net/npm/bootstrap@5.3.0/dist/js/bootstrap.bundle.min.js"></script>
</body>
</html>
